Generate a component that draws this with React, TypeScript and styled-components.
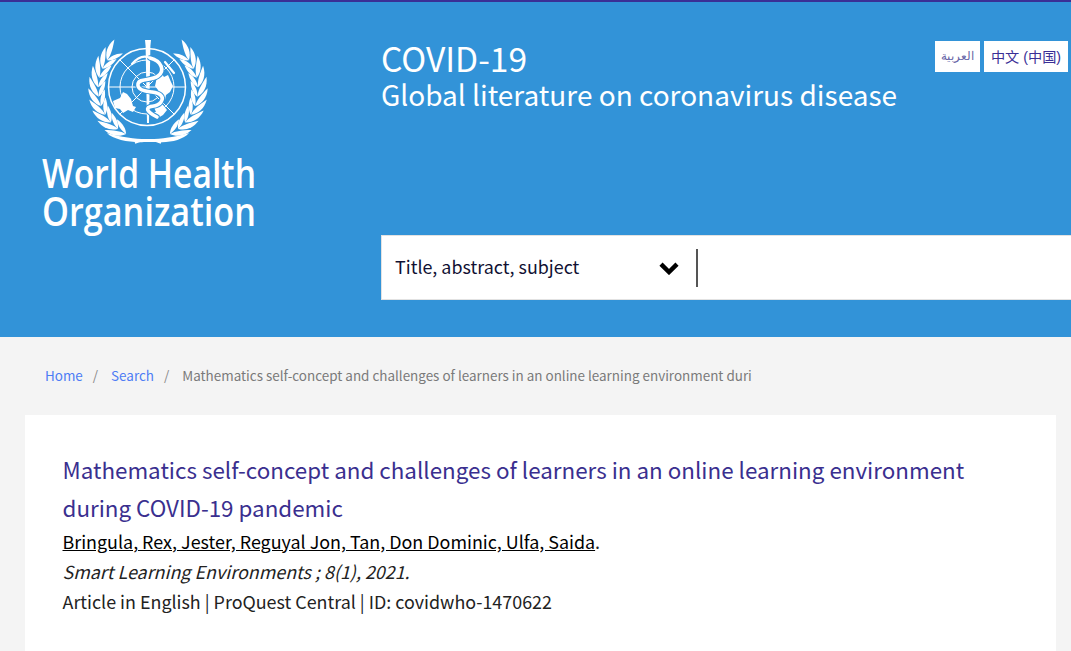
import React from "react";
import styled, { createGlobalStyle } from "styled-components";

const Global = createGlobalStyle`
  html, body { margin: 0; padding: 0; background: #f4f4f4; overflow: hidden; }
  body { font-family: "Noto Sans CJK SC", "Noto Sans", sans-serif; }
`;

const Page = styled.div`
  width: 1071px;
  height: 651px;
  overflow: hidden;
  display: flex;
  flex-direction: column;
`;

const Header = styled.header`
  height: 335px;
  flex: none;
  background: #3293d8;
  border-top: 2px solid #3a2f96;
  display: flex;
`;

const LogoCol = styled.div`
  width: 381px;
  flex: none;
  padding: 37px 0 0 40px;
  box-sizing: border-box;
`;

const Main = styled.div`
  flex: 1;
  min-width: 0;
  display: flex;
  flex-direction: column;
  justify-content: space-between;
  padding-bottom: 37px;
`;

const TopRow = styled.div`
  display: flex;
  justify-content: space-between;
  padding: 39px 3px 0 0;
`;

const Titles = styled.div`
  color: #fff;
  margin-top: -2px;
`;

const TitleMain = styled.div`
  font-size: 33.6px;
  line-height: 38px;
`;

const TitleSub = styled.div`
  font-size: 28px;
  line-height: 35px;
`;

const Langs = styled.div`
  display: flex;
  gap: 4px;
`;

const Lang = styled.a<{ $w: number }>`
  width: ${(p) => p.$w}px;
  height: 31px;
  box-sizing: border-box;
  padding-bottom: 1px;
  background: #fff;
  color: ${(p) => (p.$w > 60 ? "#3a2f96" : "#6a68a8")};
  font-family: "Liberation Sans", "Noto Sans CJK SC", sans-serif;
  font-size: ${(p) => (p.$w > 60 ? 14.2 : 12)}px;
  display: flex;
  align-items: center;
  justify-content: center;
`;

const SearchBar = styled.div`
  height: 65px;
  background: #fff;
  border: 1px solid #e2e2e2;
  border-right: 0;
  box-sizing: border-box;
  display: flex;
  align-items: center;
  padding-left: 13px;
`;

const SearchLabel = styled.span`
  width: 264px;
  font-size: 17.9px;
  line-height: 24px;
  padding-bottom: 3px;
  color: #111133;
`;

const Chevron = styled.svg`
  width: 20px;
  height: 14px;
  flex: none;
`;

const Caret = styled.span`
  width: 2px;
  height: 38px;
  margin-left: 17px;
  background: #555;
`;

const Crumbs = styled.nav`
  height: 78px;
  flex: none;
  padding: 0 0 3px 45px;
  box-sizing: border-box;
  display: flex;
  align-items: center;
  font-size: 13.45px;
  color: #7a7a7a;
  white-space: nowrap;
`;

const Crumb = styled.a`
  color: #4d7cf5;
`;

const Sep = styled.span`
  margin: 0 13px 0 10px;
  color: #8a8a8a;
`;

const Card = styled.main`
  margin: 0 15px 0 25px;
  flex: 1;
  background: #fff;
  padding: 35px 38px 0 37.5px;
`;

const ArticleTitle = styled.h1`
  margin: 0;
  font-weight: 400;
  font-size: 22.4px;
  line-height: 38px;
  color: #3a2f8f;
`;

const Line = styled.div`
  font-size: 17.9px;
  line-height: 30px;
  color: #222;
  white-space: nowrap;
`;

const Authors = styled.span`
  color: #000;
  text-decoration: underline;
`;

const Journal = styled(Line)`
  font-style: italic;
`;

const LEAVES = [64, 53, 42, 31, 20, 9, -2, -13, -24, -35];

function Emblem() {
  return (
    <svg width="216" height="200" viewBox="0 0 216 200" aria-label="World Health Organization logo">
      <g fill="none" stroke="#fff">
        <circle cx="107" cy="48" r="38.500" strokeWidth="1.500" />
        <circle cx="107" cy="48" r="27" strokeWidth="1" />
        <circle cx="107" cy="48" r="15" strokeWidth="1" />
        <path d="M68.500 48H145.500M80 21L134 75M134 21L80 75" strokeWidth="1" />
      </g>
      <g fill="#fff">
        <path d="M73 62l7-3 3-6 4 2 4 5 2 7 3 1-3 5-5-2-5 3-3-4-5-1z" />
        <path d="M117 38l5-3 2 3 4-2 3 7 2 4-3 6-4 3-1 5-5-4-2-6-3-4z" />
        <path d="M113 66l6-3 4 3 4 5-4 5-5 3-4-1 2-5z" />
        <path d="M105 1h6l-.6 6-1.400 77h-2l-1.400-77z" />
      </g>
      <g fill="none" strokeLinecap="round" strokeLinejoin="round">
        <path d="M110 19c12 3 15 13 8 18s-19 2-20 8 7 7 14 8 13 4 9 10-11 3-13 6 5 7 9 9" stroke="#3293d8" strokeWidth="5.500" />
        <path d="M110 19c12 3 15 13 8 18s-19 2-20 8 7 7 14 8 13 4 9 10-11 3-13 6 5 7 9 9" stroke="#fff" strokeWidth="3.600" />
        <path d="M110 19c-6-3-12-1-18 6" stroke="#fff" strokeWidth="2.200" />
        <path d="M125 23l9 11" stroke="#fff" strokeWidth="2.200" />
      </g>
      {[0, 1].map((side) => (
        <g key={side} transform={side ? "translate(216,0) scale(-1,1)" : undefined} fill="#fff">
          {LEAVES.map((phi) => {
            const rad = (phi * Math.PI) / 180;
            const x = 108 - 50 * Math.cos(rad);
            const y = 50 + 50 * Math.sin(rad);
            return (
              <g key={phi} transform={`translate(${x} ${y})`}>
                <path d="M0 0C-4 -6 -4.500 -14 1 -22C2 -13 2.500 -6 0 0z" transform={`rotate(${-phi - 18})`} />
                <path d="M0 0C-1.500 -5 -1 -12 3 -17C4.500 -10 3.500 -4 0 0z" transform={`rotate(${-phi + 22})`} />
              </g>
            );
          })}
        </g>
      ))}
      <path d="M67 94c14 4 28 6 39 6 1 0 3 0 4 0 11 0 25-2 39-6-6 7-20 10-31 9l-7 0-7 0c-11 1-31-2-37-9z" fill="#fff" />
      <path d="M95 104c4-2 9-3 13-3s9 1 13 3" fill="none" stroke="#fff" strokeWidth="1.500" />
      <text transform="translate(2,149) scale(1,1.310)" fill="#fff" fontFamily="'Open Sans', sans-serif" fontWeight="600" fontSize="30.500" textLength="214" lengthAdjust="spacingAndGlyphs">World Health</text>
      <text transform="translate(2,187) scale(1,1.310)" fill="#fff" fontFamily="'Open Sans', sans-serif" fontWeight="600" fontSize="30.500" textLength="214" lengthAdjust="spacingAndGlyphs">Organization</text>
    </svg>
  );
}

export default function App() {
  return (
    <Page>
      <Global />
      <Header>
        <LogoCol>
          <Emblem />
        </LogoCol>
        <Main>
          <TopRow>
            <Titles>
              <TitleMain>COVID-19</TitleMain>
              <TitleSub>Global literature on coronavirus disease</TitleSub>
            </Titles>
            <Langs>
              <Lang $w={45}>العربية</Lang>
              <Lang $w={84}>中文 (中国)</Lang>
            </Langs>
          </TopRow>
          <SearchBar>
            <SearchLabel>Title, abstract, subject</SearchLabel>
            <Chevron viewBox="0 0 20 14">
              <path d="M2 3.200L10 11l8-7.800" fill="none" stroke="#000" strokeWidth="4.500" />
            </Chevron>
            <Caret />
          </SearchBar>
        </Main>
      </Header>
      <Crumbs>
        <Crumb>Home</Crumb>
        <Sep>/</Sep>
        <Crumb>Search</Crumb>
        <Sep>/</Sep>
        <span>Mathematics self-concept and challenges of learners in an online learning environment duri</span>
      </Crumbs>
      <Card>
        <ArticleTitle>
          Mathematics self-concept and challenges of learners in an online learning environment during COVID-19 pandemic
        </ArticleTitle>
        <Line>
          <Authors>Bringula, Rex, Jester, Reguyal Jon, Tan, Don Dominic, Ulfa, Saida</Authors>.
        </Line>
        <Journal>Smart Learning Environments ; 8(1), 2021.</Journal>
        <Line>Article in English | ProQuest Central | ID: covidwho-1470622</Line>
      </Card>
    </Page>
  );
}
